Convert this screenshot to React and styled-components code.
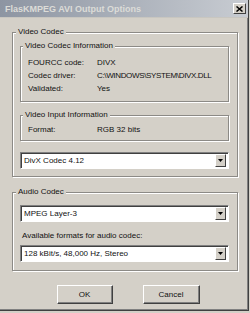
import React from "react";
import styled, { createGlobalStyle } from "styled-components";

const GlobalStyle = createGlobalStyle`
  html, body {
    margin: 0;
    padding: 0;
    background: #d4d0c8;
  }
  body {
    font-family: "Liberation Sans", Arial, sans-serif;
  }
`;

// whole dialog frame
const Window = styled.div`
  width: 249px;
  height: 311px;
  box-sizing: border-box;
  background: #d4d0c8;
  border-right: 1px solid #404040;
  border-bottom: 1px solid #404040;
  box-shadow: inset -1px -1px 0 #808080;
  display: flex;
  flex-direction: column;
  font-size: 8px;
  color: #111;
  overflow: hidden;
`;

const TitleBar = styled.div`
  height: 18px;
  flex: none;
  display: flex;
  align-items: center;
  justify-content: space-between;
  padding: 0 2px 0 5px;
  background: linear-gradient(to right, #8d95a2, #c8ccd2);
  border-bottom: 1px solid #c8c6c0;
  box-sizing: border-box;
`;

const Title = styled.span`
  font-weight: bold;
  font-size: 9px;
  color: #dcdcd8;
`;

const CloseButton = styled.div`
  width: 13px;
  height: 11px;
  box-sizing: border-box;
  background: #d4d0c8;
  border: 1px solid;
  border-color: #fff #404040 #404040 #fff;
  display: flex;
  align-items: center;
  justify-content: center;
`;

const Body = styled.div`
  padding: 9px 10px 0 12px;
  display: flex;
  flex-direction: column;
`;

// etched group box
const Group = styled.fieldset`
  margin: ${(p) => p.$mt || 0}px 0 0 0;
  padding: 0;
  border: 1px solid #8c8a86;
  box-shadow: 1px 1px 0 #fff, inset 1px 1px 0 #fff;
  min-width: 0;
`;

const Legend = styled.legend`
  font-size: 8px;
  line-height: 10px;
  padding: 0 2px;
  margin-left: ${(p) => p.$ml || 3}px;
  background: #d4d0c8;
`;

const GroupContent = styled.div`
  padding: ${(p) => p.$pad};
  display: flex;
  flex-direction: column;
`;

const InfoRow = styled.div`
  display: grid;
  grid-template-columns: 69px 1fr;
  line-height: 13px;
  white-space: nowrap;
`;

const Value = styled.span`
  letter-spacing: ${(p) => (p.$tight ? "-0.35px" : "0")};
`;

const Select = styled.div`
  margin-top: ${(p) => p.$mt || 0}px;
  height: 17px;
  box-sizing: border-box;
  background: #fff;
  border: 1px solid;
  border-color: #808080 #fff #fff #808080;
  box-shadow: inset 1px 1px 0 #404040;
  display: flex;
  align-items: center;
  padding: 1px 2px 1px 2px;
`;

const SelectText = styled.span`
  flex: 1;
  padding-left: 1px;
  line-height: 13px;
  white-space: nowrap;
`;

const SelectButton = styled.div`
  width: 11px;
  height: 13px;
  box-sizing: border-box;
  background: #d4d0c8;
  border: 1px solid;
  border-color: #fff #404040 #404040 #fff;
  display: flex;
  align-items: center;
  justify-content: center;
`;

const FieldLabel = styled.div`
  margin-top: ${(p) => p.$mt || 0}px;
  padding-left: 2px;
  line-height: 10px;
`;

const ButtonRow = styled.div`
  display: flex;
  justify-content: center;
  gap: 30px;
  margin-top: 14px;
  padding-left: 6px;
`;

const Button = styled.div`
  width: ${(p) => p.$w}px;
  height: 19px;
  box-sizing: border-box;
  background: #d4d0c8;
  border: 1px solid;
  border-color: #fff #404040 #404040 #fff;
  box-shadow: inset -1px -1px 0 #808080;
  display: flex;
  align-items: center;
  justify-content: center;
  font-size: 8px;
`;

const Arrow = () => (
  <svg width="5" height="3" viewBox="0 0 5 3">
    <path d="M0 0h5L2.5 3z" fill="#000" />
  </svg>
);

const CloseIcon = () => (
  <svg width="7" height="6" viewBox="0 0 7 6">
    <path d="M0.5 0.5L6.5 5.5M6.5 0.5L0.5 5.5" stroke="#000" strokeWidth="1.5" />
  </svg>
);

const Dropdown = ({ value, mt }) => (
  <Select $mt={mt}>
    <SelectText>{value}</SelectText>
    <SelectButton>
      <Arrow />
    </SelectButton>
  </Select>
);

export default function App() {
  return (
    <>
      <GlobalStyle />
      <Window>
        <TitleBar>
          <Title>FlasKMPEG AVI Output Options</Title>
          <CloseButton>
            <CloseIcon />
          </CloseButton>
        </TitleBar>
        <Body>
          <Group>
            <Legend $ml={3}>Video Codec</Legend>
            <GroupContent $pad="4px 8px 7px 7px">
              <Group>
                <Legend $ml={2}>Video Codec Information</Legend>
                <GroupContent $pad="4.5px 4px 6.5px 7px">
                  <InfoRow><span>FOURCC code:</span><Value>DIVX</Value></InfoRow>
                  <InfoRow><span>Codec driver:</span><Value $tight>C:\WINDOWS\SYSTEM\DIVX.DLL</Value></InfoRow>
                  <InfoRow><span>Validated:</span><Value>Yes</Value></InfoRow>
                </GroupContent>
              </Group>
              <Group $mt={8}>
                <Legend $ml={2}>Video Input Information</Legend>
                <GroupContent $pad="2.5px 4px 4.5px 7px">
                  <InfoRow><span>Format:</span><Value>RGB 32 bits</Value></InfoRow>
                </GroupContent>
              </Group>
              <Dropdown value="DivX Codec 4.12" mt={11} />
            </GroupContent>
          </Group>
          <Group $mt={10}>
            <Legend $ml={3}>Audio Codec</Legend>
            <GroupContent $pad="8px 8px 8px 7px">
              <Dropdown value="MPEG Layer-3" />
              <FieldLabel $mt={8.5}>Available formats for audio codec:</FieldLabel>
              <Dropdown value="128 kBit/s, 48,000 Hz, Stereo" mt={4.5} />
            </GroupContent>
          </Group>
          <ButtonRow>
            <Button $w={56}>OK</Button>
            <Button $w={57}>Cancel</Button>
          </ButtonRow>
        </Body>
      </Window>
    </>
  );
}
